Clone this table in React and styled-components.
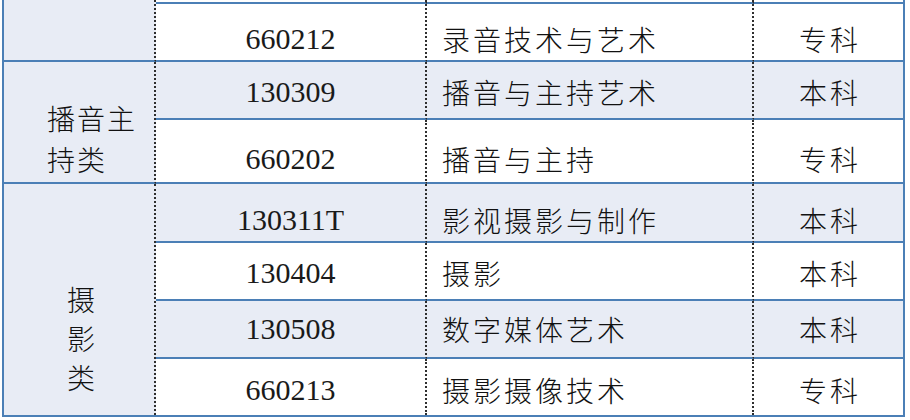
import React from "react";
import styled, { createGlobalStyle } from "styled-components";

const GlobalStyle = createGlobalStyle`
  html, body {
    margin: 0;
    padding: 0;
    background: #ffffff;
  }
  body {
    padding-left: 2px;
  }
`;

const LINE = "#4b7fb6";
const SHADE = "#e8ecf5";
const DOTS = "#2e2e2e";
const CJK = `"Noto Sans CJK SC", "Noto Sans", sans-serif`;

const Table = styled.div`
  display: grid;
  grid-template-columns: 152px 271px 327px 149px;
  grid-template-rows: 4px 58px 58px 64px 59px 58px 58px 56px;
  width: 903px;
  box-sizing: border-box;
  border-left: 2px solid ${LINE};
  border-right: 2px solid ${LINE};
  border-bottom: 2px solid ${LINE};
`;

const Cell = styled.div`
  box-sizing: border-box;
  display: flex;
  align-items: center;
  background: ${(p) => (p.$shade ? SHADE : "#ffffff")};
  border-bottom: ${(p) => (p.$last ? "none" : `2px solid ${LINE}`)};
  border-right: ${(p) => (p.$edge ? "none" : `2px dotted ${DOTS}`)};
  padding-top: ${(p) => p.$shift || 0}px;
  color: #111;
  overflow: hidden;
`;

const GroupCell = styled.div`
  box-sizing: border-box;
  grid-row: span ${(p) => p.$span};
  background: ${SHADE};
  border-right: 2px dotted ${DOTS};
  border-bottom: ${(p) => (p.$last ? "none" : `2px solid ${LINE}`)};
  padding-top: ${(p) => p.$top || 0}px;
  padding-left: ${(p) => p.$left || 0}px;
  text-align: ${(p) => p.$align || "left"};
  font-family: ${CJK};
  font-weight: 200;
  font-size: 28px;
  line-height: ${(p) => p.$lh || 40}px;
  letter-spacing: 2px;
  color: #111;
`;

const CodeCell = styled(Cell)`
  justify-content: center;
  font-family: "Liberation Serif", "DejaVu Serif", serif;
  font-size: 30px;
  line-height: 30px;
  color: #1a1a1a;
`;

const NameCell = styled(Cell)`
  padding-left: 15px;
  font-family: ${CJK};
  font-weight: 200;
  font-size: 28px;
  line-height: 28px;
  letter-spacing: 3px;
  white-space: nowrap;
`;

const LevelCell = styled(Cell)`
  justify-content: center;
  font-family: ${CJK};
  font-weight: 200;
  font-size: 28px;
  line-height: 28px;
  letter-spacing: 3px;
  padding-left: 3px;
`;

const rows = [
  { code: "", name: "", level: "", shade: false, shift: 0, group: { span: 2, lines: [] } },
  { code: "660212", name: "录音技术与艺术", level: "专科", shade: false, shift: 14 },
  {
    code: "130309", name: "播音与主持艺术", level: "本科", shade: true, shift: 4,
    group: { span: 2, lines: ["播音主", "持类"], top: 36, left: 43, lh: 41 },
  },
  { code: "660202", name: "播音与主持", level: "专科", shade: false, shift: 16 },
  {
    code: "130311T", name: "影视摄影与制作", level: "本科", shade: true, shift: 14,
    group: { span: 4, lines: ["摄", "影", "类"], top: 96, align: "center", left: 6, lh: 39, last: true },
  },
  { code: "130404", name: "摄影", level: "本科", shade: false, shift: 4 },
  { code: "130508", name: "数字媒体艺术", level: "本科", shade: true, shift: 0 },
  { code: "660213", name: "摄影摄像技术", level: "专科", shade: false, shift: 6, last: true },
];

function Group({ g }) {
  return (
    <GroupCell
      $span={g.span}
      $top={g.top}
      $left={g.left}
      $align={g.align}
      $lh={g.lh}
      $last={g.last}
    >
      {g.lines.map((l) => (
        <div key={l}>{l}</div>
      ))}
    </GroupCell>
  );
}

function Row({ row }) {
  return (
    <>
      {row.group && <Group g={row.group} />}
      <CodeCell $shade={row.shade} $shift={row.shift} $last={row.last}>
        {row.code}
      </CodeCell>
      <NameCell $shade={row.shade} $shift={row.shift} $last={row.last}>
        {row.name}
      </NameCell>
      <LevelCell $shade={row.shade} $shift={row.shift} $last={row.last} $edge>
        {row.level}
      </LevelCell>
    </>
  );
}

export default function App() {
  return (
    <>
      <GlobalStyle />
      <Table>
        {rows.map((row, i) => (
          <Row key={i} row={row} />
        ))}
      </Table>
    </>
  );
}
